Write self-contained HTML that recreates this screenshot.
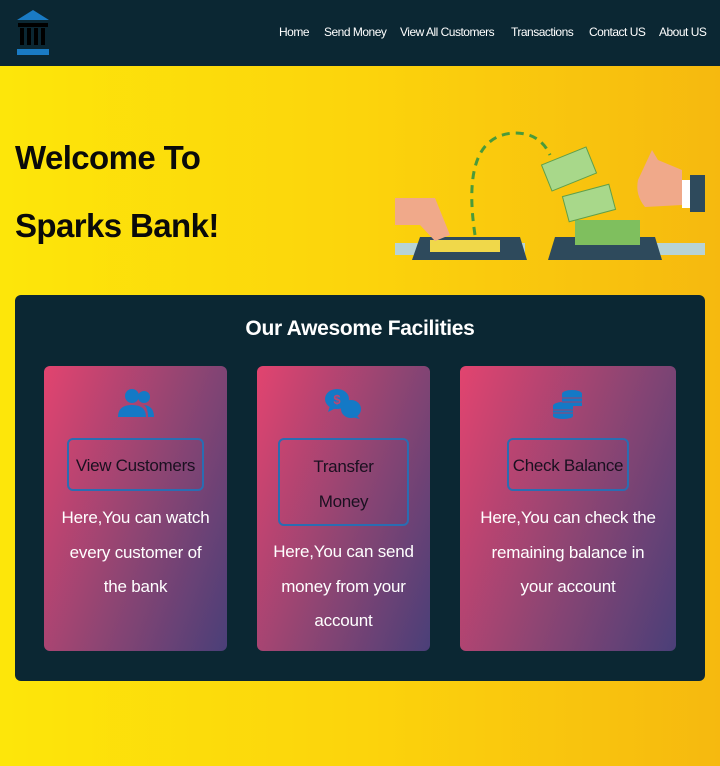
<!DOCTYPE html>
<html><head><meta charset="utf-8"><style>
*{margin:0;padding:0;box-sizing:border-box}
body{width:720px;height:766px;overflow:hidden;font-family:"Liberation Sans",sans-serif;background:linear-gradient(90deg,#fde60a 0%,#fcd40c 50%,#f6b90f 100%);position:relative}
.nav{position:absolute;left:0;top:0;width:720px;height:66px;background:#0b2733}
.nav a{position:absolute;top:25px;color:#fff;font-size:12px;text-decoration:none;letter-spacing:-0.5px}
h1{position:absolute;left:15px;font-size:33px;font-weight:bold;color:#0a0a0a;letter-spacing:-0.6px}
.panel{position:absolute;left:15px;top:295px;width:690px;height:386px;background:#0b2733;border-radius:6px}
.panel h2{position:absolute;left:0;width:100%;top:22px;text-align:center;color:#fff;font-size:21px;font-weight:bold;letter-spacing:-0.3px}
.card{position:absolute;top:71px;height:285px;border-radius:6px;background:linear-gradient(110deg,#e2446f 0%,#8c4573 55%,#4a3f78 100%);color:#fff;text-align:center}
.btn{position:absolute;border:2px solid #2a6db2;border-radius:6px;color:#1a1020;font-size:17px;line-height:35px;text-align:center;letter-spacing:-0.3px}
.txt{position:absolute;left:0;width:100%;font-size:17px;line-height:34.5px;letter-spacing:-0.2px}
.ic{position:absolute;top:22px}
</style></head><body>
<div class="nav">
<svg style="position:absolute;left:16px;top:10px" width="34" height="47" viewBox="0 0 34 47"><polygon points="17,0 33,10 1,10" fill="#1a7bc4"/><rect x="2" y="13" width="30" height="4" fill="#000"/><rect x="4" y="18" width="4" height="17" fill="#000"/><rect x="11" y="18" width="4" height="17" fill="#000"/><rect x="18" y="18" width="4" height="17" fill="#000"/><rect x="25" y="18" width="4" height="17" fill="#000"/><rect x="1" y="39" width="32" height="6" fill="#1a7bc4"/></svg>
<a style="left:279px">Home</a><a style="left:324px">Send Money</a><a style="left:400px">View All Customers</a><a style="left:511px">Transactions</a><a style="left:589px">Contact US</a><a style="left:659px">About US</a>
</div>
<h1 style="top:139px">Welcome To</h1>
<h1 style="top:207px">Sparks Bank!</h1>
<svg style="position:absolute;left:390px;top:125px" width="320" height="145" viewBox="0 0 320 145">
<path d="M85 110 Q70 10 125 8 Q150 8 160 30" stroke="#4a9a3a" stroke-width="3" fill="none" stroke-dasharray="8 6"/>
<rect x="5" y="118" width="130" height="12" fill="#b8d3d5"/>
<polygon points="30,112 130,112 137,135 22,135" fill="#2e4a5c"/><rect x="40" y="115" width="70" height="12" fill="#f0d84a"/>
<path d="M5 73 L45 73 L60 110 L45 116 L30 100 L5 100Z" fill="#f0a98a"/>
<rect x="265" y="118" width="50" height="12" fill="#b8d3d5"/>
<polygon points="165,112 265,112 272,135 158,135" fill="#2e4a5c"/>
<rect x="185" y="95" width="65" height="25" fill="#7fbf5e"/>
<g fill="#a8d88a" stroke="#5f9f4a"><rect x="155" y="30" width="48" height="28" transform="rotate(-22 179 44)"/><rect x="175" y="65" width="48" height="26" transform="rotate(-15 199 78)"/></g>
<path d="M248 55 L262 25 L268 35 L292 45 L292 80 L255 82 Q245 70 248 55Z" fill="#f0a98a"/><rect x="300" y="50" width="15" height="37" fill="#2e4a5c"/><rect x="292" y="55" width="8" height="28" fill="#fff"/>
</svg>
<div class="panel">
<h2>Our Awesome Facilities</h2>
<div class="card" style="left:29px;width:183px">
<svg class="ic" style="left:73px" width="38" height="30" viewBox="0 0 38 30"><circle cx="15" cy="8" r="7" fill="#1479c6"/><path d="M1 29 Q1 17 15 17 Q29 17 29 29Z" fill="#1479c6"/><circle cx="27" cy="9" r="6" fill="#1479c6"/><path d="M27 17 Q37 18 37 29 L31 29 Q31 20 27 17Z" fill="#1479c6"/></svg>
<div class="btn" style="left:23px;top:72px;width:137px;height:53px;line-height:51px">View Customers</div>
<div class="txt" style="top:135px">Here,You can watch<br>every customer of<br>the bank</div>
</div>
<div class="card" style="left:242px;width:173px">
<svg class="ic" style="left:67px" width="38" height="32" viewBox="0 0 38 32"><ellipse cx="13" cy="11" rx="12" ry="10" fill="#1479c6"/><path d="M6 18 L4 24 L12 20Z" fill="#1479c6"/><text x="13" y="16" font-size="13" font-weight="bold" fill="#c04570" text-anchor="middle" font-family="Liberation Sans">$</text><ellipse cx="27" cy="21" rx="10" ry="9" fill="#1479c6"/><path d="M32 27 L36 31 L28 29Z" fill="#1479c6"/></svg>
<div class="btn" style="left:21px;top:72px;width:131px;height:88px;padding-top:9px">Transfer<br>Money</div>
<div class="txt" style="top:169px">Here,You can send<br>money from your<br>account</div>
</div>
<div class="card" style="left:445px;width:216px">
<svg class="ic" style="left:92px" width="32" height="32" viewBox="0 0 32 32"><ellipse cx="20" cy="6" rx="10" ry="4" fill="#1479c6"/><rect x="10" y="6" width="20" height="12" fill="#1479c6"/><ellipse cx="11" cy="18" rx="10" ry="4" fill="#1479c6"/><rect x="1" y="18" width="20" height="10" fill="#1479c6"/><ellipse cx="11" cy="28" rx="10" ry="3" fill="#1479c6"/><path d="M1 22 H21 M1 25 H21 M10 10 H30 M10 14 H30" stroke="#9a4470" stroke-width="1"/></svg>
<div class="btn" style="left:47px;top:72px;width:122px;height:53px;line-height:51px">Check Balance</div>
<div class="txt" style="top:135px">Here,You can check the<br>remaining balance in<br>your account</div>
</div>
</div>
</body></html>
